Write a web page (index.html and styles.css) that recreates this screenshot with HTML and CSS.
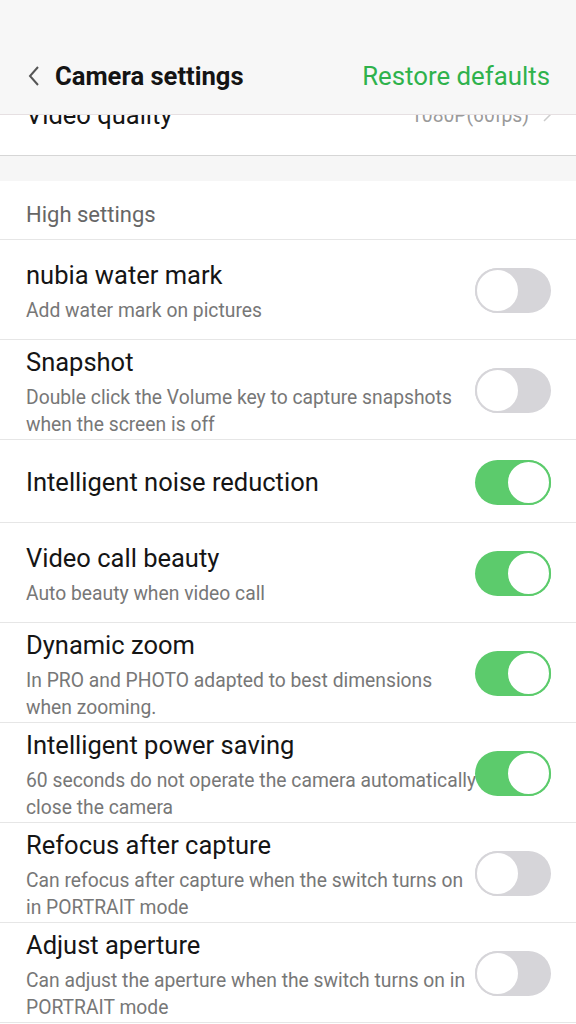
FILE: index.html
```html
<!DOCTYPE html>
<html lang="en">
<head>
  <meta charset="UTF-8">
  <title>Camera settings</title>
  <link rel="stylesheet" href="styles.css">
</head>
<body>

<header class="topbar">
  <div class="topbar-left">
    <svg class="back" width="14" height="22" viewBox="0 0 14 22">
      <path d="M11 2 L3 11 L11 20" fill="none" stroke="#555" stroke-width="2"/>
    </svg>
    <span class="title">Camera settings</span>
  </div>
  <a class="restore">Restore defaults</a>
</header>

<div class="list">
  <div class="row row-short first">
    <div class="text">
      <div class="name">Video quality</div>
    </div>
    <span class="value">1080P(60fps)</span>
    <svg class="chev" width="8" height="14" viewBox="0 0 8 14">
      <path d="M1 1 L7 7 L1 13" fill="none" stroke="#ccc" stroke-width="1.5"/>
    </svg>
  </div>

  <div class="gap"></div>

  <div class="section">High settings</div>

  <div class="row">
    <div class="text">
      <div class="name">nubia water mark</div>
      <div class="desc">Add water mark on pictures</div>
    </div>
    <span class="switch"></span>
  </div>

  <div class="row">
    <div class="text">
      <div class="name">Snapshot</div>
      <div class="desc">Double click the Volume key to capture snapshots<br>when the screen is off</div>
    </div>
    <span class="switch"></span>
  </div>

  <div class="row row-short">
    <div class="text">
      <div class="name">Intelligent noise reduction</div>
    </div>
    <span class="switch on"></span>
  </div>

  <div class="row">
    <div class="text">
      <div class="name">Video call beauty</div>
      <div class="desc">Auto beauty when video call</div>
    </div>
    <span class="switch on"></span>
  </div>

  <div class="row">
    <div class="text">
      <div class="name">Dynamic zoom</div>
      <div class="desc">In PRO and PHOTO adapted to best dimensions<br>when zooming.</div>
    </div>
    <span class="switch on"></span>
  </div>

  <div class="row">
    <div class="text">
      <div class="name">Intelligent power saving</div>
      <div class="desc">60 seconds do not operate the camera automatically<br>close the camera</div>
    </div>
    <span class="switch on"></span>
  </div>

  <div class="row">
    <div class="text">
      <div class="name">Refocus after capture</div>
      <div class="desc">Can refocus after capture when the switch turns on<br>in PORTRAIT mode</div>
    </div>
    <span class="switch"></span>
  </div>

  <div class="row">
    <div class="text">
      <div class="name">Adjust aperture</div>
      <div class="desc">Can adjust the aperture when the switch turns on in<br>PORTRAIT mode</div>
    </div>
    <span class="switch"></span>
  </div>
</div>

</body>
</html>
```

FILE: styles.css
```css
body {
  margin: 0;
  width: 576px;
  height: 1024px;
  overflow: hidden;
  background: #fff;
  font-family: Roboto, "Noto Sans", sans-serif;
  display: flex;
  flex-direction: column;
}

.topbar {
  height: 115px;
  flex: none;
  box-sizing: border-box;
  padding: 38px 26px 0 27px;
  background: #f7f7f7;
  border-bottom: 1px solid #e6e0e2;
  display: flex;
  align-items: center;
  justify-content: space-between;
  position: relative;
  z-index: 2;
}

.topbar-left {
  display: flex;
  align-items: center;
  gap: 14px;
}

.back {
  display: block;
}

.title {
  font-size: 25.6px;
  font-weight: bold;
  color: #141414;
}

.restore {
  font-size: 25.8px;
  color: #2fb24c;
}

.list {
  flex: 1;
  overflow: hidden;
}

.row {
  height: 100px;
  box-sizing: border-box;
  border-bottom: 1px solid #e6e6e6;
  display: flex;
  align-items: center;
  padding: 2px 25px 0 26px;
}

.row-short {
  height: 83px;
}

/* list is scrolled a little, first row sits under the top bar */
.first {
  margin-top: -42px;
  border-bottom-color: #d6d6d6;
}

.text {
  flex: 1;
  min-width: 0;
  white-space: nowrap;
}

.name {
  font-size: 25.5px;
  line-height: 36px;
  color: #151515;
}

.desc {
  margin-top: 4px;
  font-size: 19.3px;
  line-height: 27px;
  color: #777;
}

.value {
  font-size: 19.3px;
  color: #9a9a9a;
  margin-right: 14px;
}

.chev {
  display: block;
}

.gap {
  height: 25px;
  background: #f6f6f6;
}

.section {
  height: 59px;
  box-sizing: border-box;
  padding: 22px 26px 0;
  font-size: 22px;
  line-height: 24px;
  color: #666;
  border-bottom: 1px solid #e6e6e6;
}

.switch {
  flex: none;
  width: 76px;
  height: 45px;
  border-radius: 23px;
  background: #d6d5d9;
  position: relative;
}

.switch::after {
  content: "";
  position: absolute;
  left: 0;
  top: 0;
  width: 41px;
  height: 41px;
  border-radius: 50%;
  background: #fff;
  border: 2px solid #d6d5d9;
}

.switch.on {
  background: #5ccb6c;
}

.switch.on::after {
  left: auto;
  right: 0;
  border-color: #5ccb6c;
}
```
